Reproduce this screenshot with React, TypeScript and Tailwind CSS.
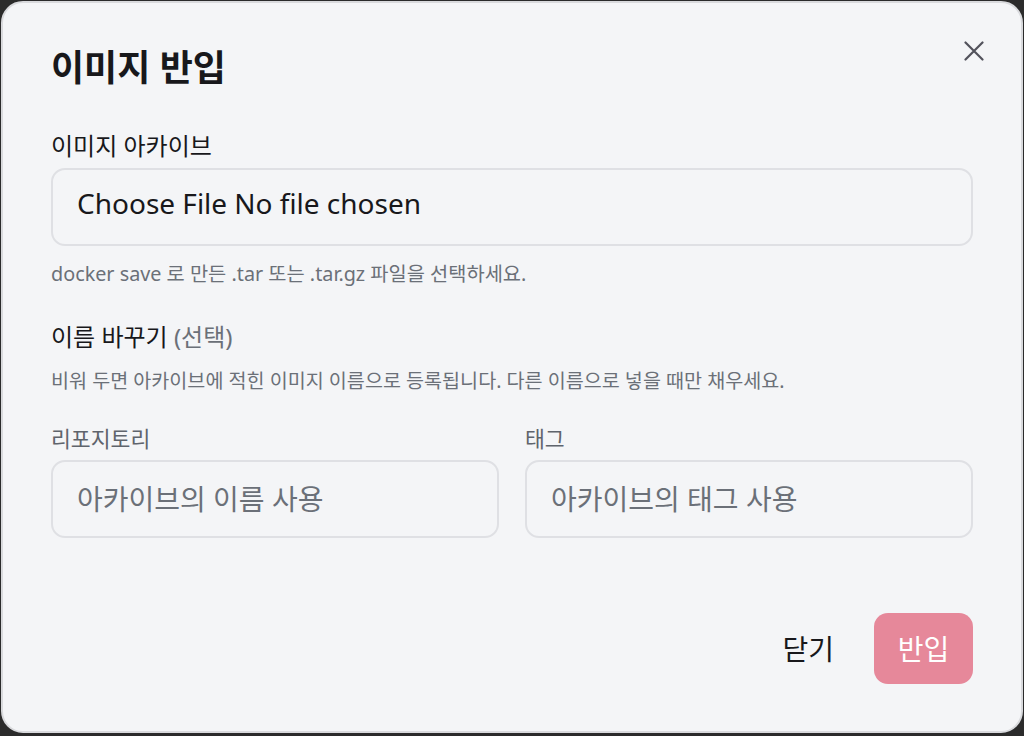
const font = { fontFamily: '"Noto Sans", "Noto Sans CJK KR", sans-serif' };

function CloseIcon() {
  return (
    <svg width="20" height="20" viewBox="0 0 20 20" fill="none" stroke="#52525b" strokeWidth="2.2" strokeLinecap="round">
      <path d="M1.5 1.5l17 17M18.5 1.5l-17 17" />
    </svg>
  );
}

export default function App() {
  return (
    <div className="h-[736px] w-[1024px] bg-[#2b2b2b] pl-px pt-px" style={font}>
      <div className="relative flex h-[732px] w-[1022px] flex-col rounded-[22px] border-2 border-[#d9dadd] bg-[#f4f5f7] px-12 pt-[41px] text-[#18181b]">
        <button className="absolute right-[37px] top-[38px] p-0" aria-label="닫기">
          <CloseIcon />
        </button>

        <h2 className="text-[36px] font-bold leading-[48px]">이미지 반입</h2>

        <label className="mt-[38px] text-[24px] leading-[32px]">이미지 아카이브</label>
        <div className="mt-[6px] flex h-[78px] items-center rounded-[14px] border-2 border-[#dfe0e4] px-[24px] pb-[9px]">
          <input type="file" className="w-full text-[28px] leading-[36px] text-[#18181b] file:mr-[7px]" />
        </div>
        <p className="mt-[14px] text-[19.8px] leading-[28px] text-[#6b7078]">
          docker save 로 만든 .tar 또는 .tar.gz 파일을 선택하세요.
        </p>

        <div className="mt-[33px] text-[24px] leading-[32px]">
          이름 바꾸기 <span className="text-[#6b7078]">(선택)</span>
        </div>
        <p className="mt-[14px] text-[19.6px] leading-[28px] text-[#6b7078]">
          비워 두면 아카이브에 적힌 이미지 이름으로 등록됩니다. 다른 이름으로 넣을 때만 채우세요.
        </p>

        <div className="mt-[30px] grid grid-cols-2 gap-[26px]">
          <div className="flex flex-col">
            <label className="text-[21.6px] leading-[28px] text-[#5f646c]">리포지토리</label>
            <input
              placeholder="아카이브의 이름 사용"
              className="mt-[7px] h-[78px] rounded-[14px] border-2 border-[#dfe0e4] bg-transparent px-[24px] text-[28px] outline-none placeholder:text-[#6b7078]"
            />
          </div>
          <div className="flex flex-col">
            <label className="text-[21.6px] leading-[28px] text-[#5f646c]">태그</label>
            <input
              placeholder="아카이브의 태그 사용"
              className="mt-[7px] h-[78px] rounded-[14px] border-2 border-[#dfe0e4] bg-transparent px-[24px] text-[28px] outline-none placeholder:text-[#6b7078]"
            />
          </div>
        </div>

        <div className="mt-[75px] flex justify-end gap-[16px]">
          <button className="h-[71px] px-[24px] text-[28px] text-[#18181b]">닫기</button>
          <button disabled className="h-[71px] w-[99px] rounded-[14px] bg-[#e6889a] text-[28px] text-white">
            반입
          </button>
        </div>
      </div>
    </div>
  );
}
